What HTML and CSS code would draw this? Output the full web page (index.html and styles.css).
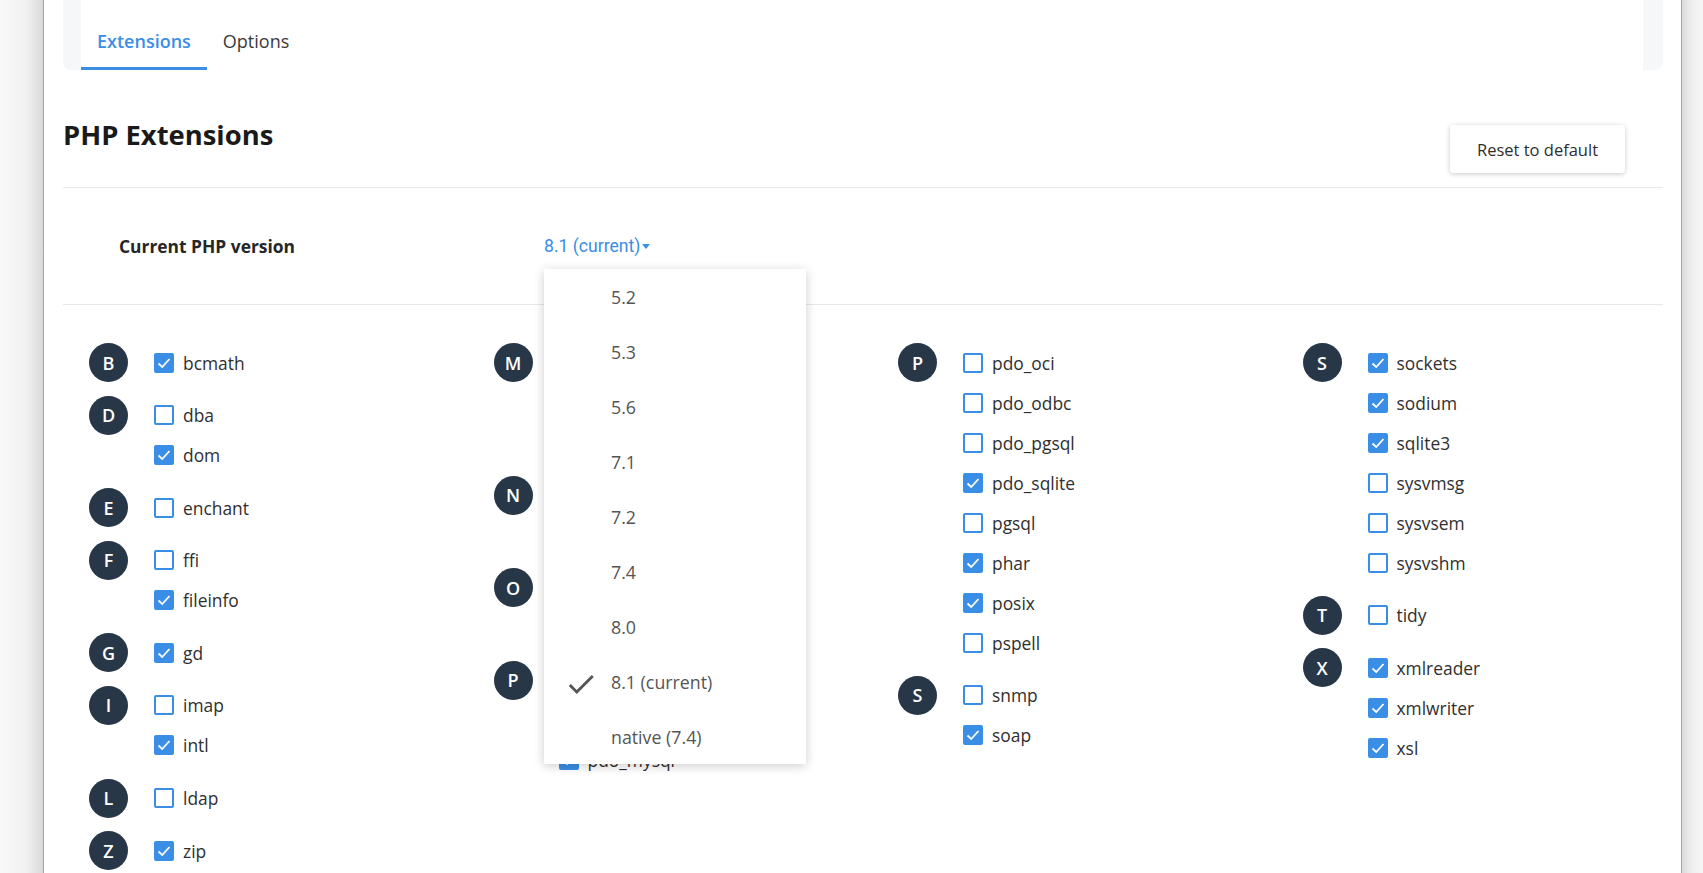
FILE: index.html
```html
<!DOCTYPE html>
<html lang="en">
<head>
<meta charset="utf-8">
<title>PHP Extensions</title>
<link rel="stylesheet" href="styles.css">
</head>
<body>
<div class="shade shade-left"></div>
<main class="page">
  <div class="tabcard">
    <nav class="tabs">
      <a class="tab tab-active">Extensions</a>
      <a class="tab">Options</a>
    </nav>
  </div>

  <header class="head">
    <h1 class="title">PHP Extensions</h1>
    <button class="btn-reset">Reset to default</button>
  </header>

  <section class="version-row">
    <div class="version-label">Current PHP version</div>
    <div class="version-select">
      <a class="version-link">8.1 (current)<span class="caret"></span></a>
      <ul class="dropdown">
        <li class="dd-item"><span class="dd-mark"></span>5.2</li>
        <li class="dd-item"><span class="dd-mark"></span>5.3</li>
        <li class="dd-item"><span class="dd-mark"></span>5.6</li>
        <li class="dd-item"><span class="dd-mark"></span>7.1</li>
        <li class="dd-item"><span class="dd-mark"></span>7.2</li>
        <li class="dd-item"><span class="dd-mark"></span>7.4</li>
        <li class="dd-item"><span class="dd-mark"></span>8.0</li>
        <li class="dd-item"><span class="dd-mark"><svg class="dd-check" viewBox="0 0 24 24"><path d="M9 16.17L4.83 12l-1.42 1.41L9 19 21 7l-1.41-1.41z"/></svg></span>8.1 (current)</li>
        <li class="dd-item"><span class="dd-mark"></span>native (7.4)</li>
      </ul>
    </div>
  </section>

  <section class="ext-grid">
    <div class="ext-col">
      <div class="group"><span class="letter">B</span><ul class="items">
        <li class="item"><span class="cb on"><svg viewBox="0 0 20 20"><polyline points="4.5,10.5 8.2,14 15.5,6"/></svg></span>bcmath</li>
      </ul></div>
      <div class="group"><span class="letter">D</span><ul class="items">
        <li class="item"><span class="cb"></span>dba</li>
        <li class="item"><span class="cb on"><svg viewBox="0 0 20 20"><polyline points="4.5,10.5 8.2,14 15.5,6"/></svg></span>dom</li>
      </ul></div>
      <div class="group"><span class="letter">E</span><ul class="items">
        <li class="item"><span class="cb"></span>enchant</li>
      </ul></div>
      <div class="group"><span class="letter">F</span><ul class="items">
        <li class="item"><span class="cb"></span>ffi</li>
        <li class="item"><span class="cb on"><svg viewBox="0 0 20 20"><polyline points="4.5,10.5 8.2,14 15.5,6"/></svg></span>fileinfo</li>
      </ul></div>
      <div class="group"><span class="letter">G</span><ul class="items">
        <li class="item"><span class="cb on"><svg viewBox="0 0 20 20"><polyline points="4.5,10.5 8.2,14 15.5,6"/></svg></span>gd</li>
      </ul></div>
      <div class="group"><span class="letter">I</span><ul class="items">
        <li class="item"><span class="cb"></span>imap</li>
        <li class="item"><span class="cb on"><svg viewBox="0 0 20 20"><polyline points="4.5,10.5 8.2,14 15.5,6"/></svg></span>intl</li>
      </ul></div>
      <div class="group"><span class="letter">L</span><ul class="items">
        <li class="item"><span class="cb"></span>ldap</li>
      </ul></div>
      <div class="group"><span class="letter">Z</span><ul class="items">
        <li class="item"><span class="cb on"><svg viewBox="0 0 20 20"><polyline points="4.5,10.5 8.2,14 15.5,6"/></svg></span>zip</li>
      </ul></div>
    </div>

    <div class="ext-col">
      <div class="group"><span class="letter">M</span><ul class="items">
        <li class="item"><span class="cb on"><svg viewBox="0 0 20 20"><polyline points="4.5,10.5 8.2,14 15.5,6"/></svg></span>mbstring</li>
        <li class="item"><span class="cb on"><svg viewBox="0 0 20 20"><polyline points="4.5,10.5 8.2,14 15.5,6"/></svg></span>mysqli</li>
        <li class="item"><span class="cb on"><svg viewBox="0 0 20 20"><polyline points="4.5,10.5 8.2,14 15.5,6"/></svg></span>mysqlnd</li>
      </ul></div>
      <div class="group"><span class="letter">N</span><ul class="items">
        <li class="item"><span class="cb"></span>nd_mysqli</li>
        <li class="item"><span class="cb"></span>nd_pdo_mysql</li>
      </ul></div>
      <div class="group"><span class="letter">O</span><ul class="items">
        <li class="item"><span class="cb"></span>oci8</li>
        <li class="item"><span class="cb on"><svg viewBox="0 0 20 20"><polyline points="4.5,10.5 8.2,14 15.5,6"/></svg></span>opcache</li>
      </ul></div>
      <div class="group"><span class="letter">P</span><ul class="items">
        <li class="item"><span class="cb on"><svg viewBox="0 0 20 20"><polyline points="4.5,10.5 8.2,14 15.5,6"/></svg></span>pdo</li>
        <li class="item"><span class="cb"></span>pdo_firebird</li>
        <li class="item"><span class="cb on"><svg viewBox="0 0 20 20"><polyline points="4.5,10.5 8.2,14 15.5,6"/></svg></span>pdo_mysql</li>
      </ul></div>
    </div>

    <div class="ext-col">
      <div class="group"><span class="letter">P</span><ul class="items">
        <li class="item"><span class="cb"></span>pdo_oci</li>
        <li class="item"><span class="cb"></span>pdo_odbc</li>
        <li class="item"><span class="cb"></span>pdo_pgsql</li>
        <li class="item"><span class="cb on"><svg viewBox="0 0 20 20"><polyline points="4.5,10.5 8.2,14 15.5,6"/></svg></span>pdo_sqlite</li>
        <li class="item"><span class="cb"></span>pgsql</li>
        <li class="item"><span class="cb on"><svg viewBox="0 0 20 20"><polyline points="4.5,10.5 8.2,14 15.5,6"/></svg></span>phar</li>
        <li class="item"><span class="cb on"><svg viewBox="0 0 20 20"><polyline points="4.5,10.5 8.2,14 15.5,6"/></svg></span>posix</li>
        <li class="item"><span class="cb"></span>pspell</li>
      </ul></div>
      <div class="group"><span class="letter">S</span><ul class="items">
        <li class="item"><span class="cb"></span>snmp</li>
        <li class="item"><span class="cb on"><svg viewBox="0 0 20 20"><polyline points="4.5,10.5 8.2,14 15.5,6"/></svg></span>soap</li>
      </ul></div>
    </div>

    <div class="ext-col">
      <div class="group"><span class="letter">S</span><ul class="items">
        <li class="item"><span class="cb on"><svg viewBox="0 0 20 20"><polyline points="4.5,10.5 8.2,14 15.5,6"/></svg></span>sockets</li>
        <li class="item"><span class="cb on"><svg viewBox="0 0 20 20"><polyline points="4.5,10.5 8.2,14 15.5,6"/></svg></span>sodium</li>
        <li class="item"><span class="cb on"><svg viewBox="0 0 20 20"><polyline points="4.5,10.5 8.2,14 15.5,6"/></svg></span>sqlite3</li>
        <li class="item"><span class="cb"></span>sysvmsg</li>
        <li class="item"><span class="cb"></span>sysvsem</li>
        <li class="item"><span class="cb"></span>sysvshm</li>
      </ul></div>
      <div class="group"><span class="letter">T</span><ul class="items">
        <li class="item"><span class="cb"></span>tidy</li>
      </ul></div>
      <div class="group"><span class="letter">X</span><ul class="items">
        <li class="item"><span class="cb on"><svg viewBox="0 0 20 20"><polyline points="4.5,10.5 8.2,14 15.5,6"/></svg></span>xmlreader</li>
        <li class="item"><span class="cb on"><svg viewBox="0 0 20 20"><polyline points="4.5,10.5 8.2,14 15.5,6"/></svg></span>xmlwriter</li>
        <li class="item"><span class="cb on"><svg viewBox="0 0 20 20"><polyline points="4.5,10.5 8.2,14 15.5,6"/></svg></span>xsl</li>
      </ul></div>
    </div>
  </section>
</main>
<div class="shade shade-right"></div>
</body>
</html>
```

FILE: styles.css
```css
* { box-sizing: border-box; }

html, body {
  margin: 0;
  height: 100%;
  overflow: hidden;
}

body {
  display: flex;
  background: #ffffff;
  font-family: "Open Sans", "Noto Sans", sans-serif;
  color: #333333;
}

.shade { flex: none; }
.shade-left {
  width: 43px;
  background: linear-gradient(to right, #f8f8f8 0%, #f1f1f1 60%, #d9d9d9 100%);
}
.shade-right {
  width: 21px;
  background: linear-gradient(to right, #dadada 0%, #efefef 50%, #f6f6f6 100%);
}

.page {
  flex: 1;
  min-width: 0;
  border-left: 1px solid #98a7b9;
  border-right: 1px solid #98a7b9;
  padding: 0 18px 0 19px;
  background: #ffffff;
}

/* Tabs */
.tabcard {
  background: #f6f7f9;
  border-radius: 0 0 8px 8px;
  padding: 0 20px 0 18px;
}
.tabs {
  height: 70px;
  background: #ffffff;
  display: flex;
  align-items: flex-end;
}
.tab {
  display: block;
  font-size: 18px;
  line-height: 24px;
  padding: 11px 16px 14px;
  border-bottom: 3px solid transparent;
  color: #3a3a3a;
}
.tab-active {
  color: #3a8ee6;
  font-weight: 600;
  border-bottom-color: #3a8ee6;
}

/* Header */
.head {
  height: 118px;
  display: flex;
  justify-content: space-between;
  align-items: flex-start;
  padding-right: 38px;
  border-bottom: 1px solid #e6e8eb;
}
.title {
  margin: 47px 0 0;
  font-size: 27.4px;
  line-height: 36px;
  font-weight: 700;
  color: #1a1a1a;
}
.btn-reset {
  margin-top: 55px;
  width: 175px;
  height: 48px;
  border: 0;
  border-radius: 3px;
  background: #ffffff;
  box-shadow: 0 1px 5px rgba(0, 0, 0, 0.22);
  font-family: "Open Sans", sans-serif;
  font-size: 16.5px;
  color: #2e2e2e;
}

/* Version row */
.version-row {
  height: 117px;
  display: flex;
  align-items: flex-start;
  padding: 46px 0 0 56px;
  border-bottom: 1px solid #e6e8eb;
}
.version-label {
  width: 425px;
  font-size: 17.4px;
  line-height: 24px;
  font-weight: 700;
  color: #262626;
}
.version-select {
  position: relative;
}
.version-link {
  display: flex;
  align-items: center;
  font-family: Roboto, "Open Sans", sans-serif;
  font-size: 17.6px;
  line-height: 24px;
  color: #3a8ee6;
}
.caret {
  width: 0;
  height: 0;
  margin-left: 2px;
  border-left: 4.5px solid transparent;
  border-right: 4.5px solid transparent;
  border-top: 5px solid #3a8ee6;
}

.dropdown {
  position: absolute;
  left: 0;
  top: 35px;
  z-index: 5;
  width: 262px;
  margin: 0;
  padding: 0;
  list-style: none;
  background: #ffffff;
  box-shadow: 0 2px 10px rgba(0, 0, 0, 0.2);
}
.dd-item {
  height: 55px;
  display: flex;
  align-items: center;
  padding-left: 20px;
  font-size: 17.8px;
  color: #555555;
}
.dd-mark {
  width: 34px;
  height: 34px;
  margin-right: 13px;
  display: flex;
  align-items: center;
  justify-content: center;
  position: relative;
  top: 2px;
}
.dd-check {
  width: 34px;
  height: 34px;
  fill: #555555;
}

/* Extension grid */
.ext-grid {
  display: grid;
  grid-template-columns: repeat(4, 404.5px);
  padding: 37.5px 0 0 26px;
}
.ext-col {
  display: flex;
  flex-direction: column;
  gap: 12.6px;
}
.group {
  display: flex;
  align-items: flex-start;
}
.letter {
  flex: none;
  width: 39px;
  height: 39px;
  margin: 0.5px 26px 0 0;
  border-radius: 50%;
  background: #283747;
  color: #ffffff;
  font-size: 18px;
  font-weight: 600;
  display: flex;
  align-items: center;
  justify-content: center;
}
.items {
  margin: 0;
  padding: 0;
  list-style: none;
}
.item {
  height: 40px;
  display: flex;
  align-items: center;
  gap: 9px;
  font-size: 17.4px;
  color: #2f2f2f;
}
.cb {
  flex: none;
  width: 20px;
  height: 20px;
  border: 2px solid #3a8ee6;
  border-radius: 2px;
  background: #ffffff;
  display: flex;
  align-items: center;
  justify-content: center;
}
.cb.on {
  background: #3a8ee6;
}
.cb svg {
  width: 20px;
  height: 20px;
  flex: none;
  fill: none;
  stroke: #ffffff;
  stroke-width: 1.8;
}
```
